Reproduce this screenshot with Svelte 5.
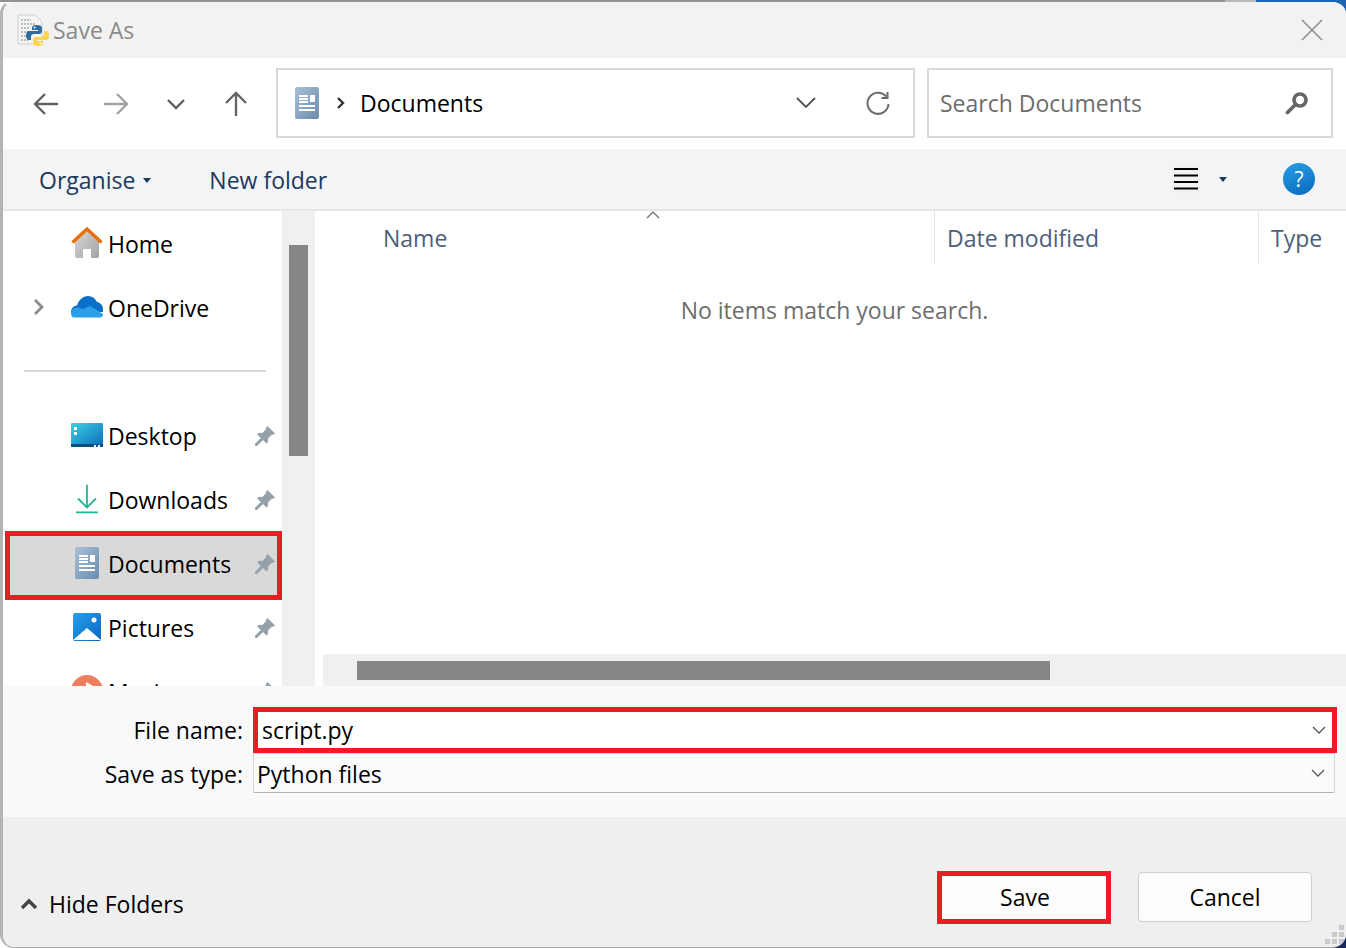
<script lang="ts">
  const places = [
    { label: 'Desktop', icon: 'desktop' },
    { label: 'Downloads', icon: 'downloads' },
    { label: 'Documents', icon: 'documents', selected: true },
    { label: 'Pictures', icon: 'pictures' },
    { label: 'Music', icon: 'music' }
  ];
</script>

{#snippet docIcon(size)}
  <svg class="doc" width={size} height={size * 1.33} viewBox="0 0 24 32">
    <defs>
      <linearGradient id="docfill" x1="0" y1="0" x2="1" y2="1">
        <stop offset="0" stop-color="#a9c0d8" />
        <stop offset="1" stop-color="#6a8bad" />
      </linearGradient>
    </defs>
    <rect width="24" height="32" rx="2" fill="url(#docfill)" />
    <path d="M4 9h9M4 12h9M4 15h9M4 19h16M4 23h16" stroke="#fff" stroke-width="2" fill="none" />
    <rect x="15" y="8" width="5" height="7" fill="#fff" />
  </svg>
{/snippet}

{#snippet pin()}
  <svg class="pin" width="22" height="22" viewBox="0 0 22 22">
    <path d="M13.500 1 21 8.500l-2 1.500-1-.5-4 4 .2 3.300-1.700 1.700L9 15l-6 6-2-.3-.2-1.700 6-6L3.200 9.500 5 7.800l3.300.2 4-4-.5-1z" fill="#97a1a9" />
  </svg>
{/snippet}

<div class="window">
  <header class="titlebar">
    <svg width="32" height="32" viewBox="0 0 32 32">
      <path d="M1 1h17l7 7v22H1z" fill="#f4f4f4" stroke="#cfcfcf" />
      <path d="M4 6h10M4 10h14M4 14h8M4 18h8M4 22h8M4 26h8" stroke="#a9a9a9" stroke-width="1.500" stroke-dasharray="2 1" />
      <path d="M20 11c-4 0-5 1-5 3v2h6v1h-9c-2 0-3 2-3 4.500s1 4.500 3 4.500h2v-3c0-2 1-3 3-3h5c2 0 3-1 3-3v-3c0-2-2-3-5-3z" fill="#2f6d9f" />
      <path d="M21 32c4 0 5-1 5-3v-2h-6v-1h9c2 0 3-2 3-4.500S31 17 29 17h-2v3c0 2-1 3-3 3h-5c-2 0-3 1-3 3v3c0 2 2 3 5 3z" fill="#fbd44c" />
      <circle cx="17.500" cy="13.500" r="1" fill="#fff" />
      <circle cx="23.500" cy="29.500" r="1" fill="#fff" />
    </svg>
    <span class="title">Save As</span>
    <svg class="close" width="22" height="22" viewBox="0 0 22 22">
      <path d="M1 1l20 20M21 1 1 21" stroke="#8a8a8a" stroke-width="1.500" fill="none" />
    </svg>
  </header>

  <div class="navbar">
    <div class="navbtns">
      <svg width="26" height="24" viewBox="0 0 26 24"><path d="M25 12H2M12 2 2 12l10 10" stroke="#636363" stroke-width="2.400" fill="none" /></svg>
      <svg width="26" height="24" viewBox="0 0 26 24"><path d="M1 12h23M14 2l10 10-10 10" stroke="#a2a2a2" stroke-width="2.400" fill="none" /></svg>
      <svg width="18" height="12" viewBox="0 0 18 12"><path d="M1 2l8 8 8-8" stroke="#5f5f5f" stroke-width="2.400" fill="none" /></svg>
      <svg width="24" height="26" viewBox="0 0 24 26"><path d="M12 25V2M2 12 12 2l10 10" stroke="#666" stroke-width="2.400" fill="none" /></svg>
    </div>
    <div class="crumbs">
      {@render docIcon(24)}
      <svg class="sep" width="8" height="12" viewBox="0 0 8 12"><path d="M1 1l5 5-5 5" stroke="#333" stroke-width="2.400" fill="none" /></svg>
      <span>Documents</span>
      <svg class="drop" width="20" height="12" viewBox="0 0 20 12"><path d="M1 1l9 9 9-9" stroke="#555" stroke-width="1.800" fill="none" /></svg>
      <svg class="refresh" width="24" height="24" viewBox="0 0 24 24"><path d="M20 5.500A10.500 10.500 0 1 0 22.500 13M21.500 1v6h-6" stroke="#6b6b6b" stroke-width="2" fill="none" /></svg>
    </div>
    <div class="search">
      <span>Search Documents</span>
      <svg width="24" height="24" viewBox="0 0 24 24"><circle cx="15" cy="9" r="6" stroke="#666" stroke-width="3.600" fill="none" /><path d="M10.500 13.500 2.500 21.500" stroke="#666" stroke-width="3.800" stroke-linecap="round" /></svg>
    </div>
  </div>

  <div class="commands">
    <span class="cmd">Organise <i class="caret"></i></span>
    <span class="cmd newfolder">New folder</span>
    <div class="viewbtn">
      <svg width="28" height="28" viewBox="0 0 28 28"><path d="M2 4h24M2 10.500h24M2 17h24M2 23.500h24" stroke="#000" stroke-width="2" /></svg>
    </div>
    <i class="caret view"></i>
    <span class="help">?</span>
  </div>

  <div class="main">
    <nav class="sidebar">
      <div class="row">
        <svg class="icon" width="32" height="32" viewBox="0 0 32 32">
          <defs>
            <linearGradient id="wall" x1="0" y1="0" x2="1" y2="1"><stop offset="0" stop-color="#d8d8d8" /><stop offset="1" stop-color="#a3a3a3" /></linearGradient>
          </defs>
          <path d="M4 13 16 3l12 10v16a2 2 0 0 1-2 2h-6v-9h-8v9H6a2 2 0 0 1-2-2z" fill="url(#wall)" />
          <path d="M1.500 15.500 16 2l14.500 13.500" stroke="#e8710a" stroke-width="3.400" fill="none" />
        </svg>
        <span>Home</span>
      </div>
      <div class="row">
        <svg class="chev" width="12" height="18" viewBox="0 0 12 18"><path d="M2 2l7 7-7 7" stroke="#8c8c8c" stroke-width="2.800" fill="none" /></svg>
        <svg class="icon" width="32" height="22" viewBox="0 0 32 22">
          <path d="M0 16c0-3 2-6 6-6.500C8 3 13 0 17 0c4 0 7 2 9 6 3 .5 6 3 6 7v3H0z" fill="#0a6fc9" />
          <path d="M3 21.500c-2 0-3-2-3-5 0-2 1-3 3-4 3-2 6-1 9 .5l7-3 13 8c0 2-1 3.500-3 3.500z" fill="#2aa0ea" />
        </svg>
        <span>OneDrive</span>
      </div>
      <div class="divider"><hr /></div>
      {#each places as place}
        <div class="row" class:selected={place.selected}>
          {#if place.icon === 'desktop'}
            <svg class="icon" width="32" height="24" viewBox="0 0 32 24">
              <defs>
                <linearGradient id="screen" x1="0" y1="0" x2="1" y2="1"><stop offset="0" stop-color="#3bd3e2" /><stop offset="1" stop-color="#0b6cbf" /></linearGradient>
              </defs>
              <rect width="32" height="23" rx="1" fill="url(#screen)" />
              <rect y="21" width="32" height="3" fill="#0d4f7d" />
              <path d="M3 4h3v3H3zM3 9h3v3H3zM23 22h2v2h-2zM27 22h2v2h-2z" fill="#fff" />
            </svg>
          {:else if place.icon === 'downloads'}
            <svg class="icon" width="24" height="29" viewBox="0 0 24 29">
              <path d="M12 0v23M3 14l9 9 9-9M1 28h22" stroke="#23b596" stroke-width="1.800" fill="none" />
            </svg>
          {:else if place.icon === 'documents'}
            {@render docIcon(24)}
          {:else if place.icon === 'pictures'}
            <svg class="icon" width="28" height="28" viewBox="0 0 28 28">
              <defs>
                <linearGradient id="sky" x1="0" y1="0" x2="1" y2="1"><stop offset="0" stop-color="#25a1e8" /><stop offset="1" stop-color="#0b67c4" /></linearGradient>
              </defs>
              <rect width="28" height="28" rx="2" fill="url(#sky)" />
              <path d="M0 27 14 15l14 12z" fill="#fff" />
              <circle cx="21" cy="7" r="2.500" fill="#fff" />
            </svg>
          {:else}
            <svg class="icon" width="32" height="32" viewBox="0 0 32 32">
              <circle cx="16" cy="16" r="16" fill="#ec7f60" />
              <path d="M15 7l7 4-5 1v9h-2z" fill="#fff" />
            </svg>
          {/if}
          <span>{place.label}</span>
          {@render pin()}
        </div>
      {/each}
    </nav>
    <div class="vscroll"><div class="vthumb"></div></div>
    <section class="files">
      <div class="columns">
        <svg class="sortmark" width="14" height="8" viewBox="0 0 14 8"><path d="M1 7l6-6 6 6" stroke="#6a6a6a" stroke-width="1.200" fill="none" /></svg>
        <div class="col name">Name</div>
        <div class="col date">Date modified</div>
        <div class="col type">Type</div>
      </div>
      <p class="empty">No items match your search.</p>
      <div class="hscroll"><div class="hthumb"></div></div>
    </section>
  </div>

  <div class="form">
    <label for="fname">File name:</label>
    <div class="field active">
      <input id="fname" value="script.py" />
      <svg width="14" height="8" viewBox="0 0 14 8"><path d="M1 1l6 6 6-6" stroke="#555" stroke-width="1.300" fill="none" /></svg>
    </div>
    <label for="ftype" class="lower">Save as type:</label>
    <div class="field" id="ftype">
      <span class="lower">Python files</span>
      <svg width="14" height="8" viewBox="0 0 14 8"><path d="M1 1l6 6 6-6" stroke="#555" stroke-width="1.300" fill="none" /></svg>
    </div>
  </div>

  <footer class="footer">
    <div class="hide">
      <svg width="18" height="12" viewBox="0 0 18 12"><path d="M2 10l7-7 7 7" stroke="#444" stroke-width="3.400" fill="none" /></svg>
      <span>Hide Folders</span>
    </div>
    <button class="save">Save</button>
    <button class="cancel">Cancel</button>
    <svg class="grip" width="22" height="22" viewBox="0 0 22 22">
      <path d="M15 0h5v5h-5zM8 7h5v5H8zM15 7h5v5h-5zM1 14h5v5H1zM8 14h5v5H8zM15 14h5v5h-5z" fill="#c9c9c9" />
    </svg>
  </footer>
</div>

<style>
  :global(body) {
    margin: 0;
    background: #fff;
    overflow: hidden;
  }
  /* what shows behind the rounded window: top edge strip and the desktop in two corners */
  :global(#app) {
    background:
      linear-gradient(90deg, #929292 0 1225px, #b9b9b9 1225px 1256px, #1e63b4 1256px) top / 100% 2px no-repeat,
      linear-gradient(#1e63b4, #1e63b4) top right / 40px 30px no-repeat,
      linear-gradient(#1a2a5c, #1a2a5c) bottom right / 40px 30px no-repeat;
  }
  .window {
    box-sizing: border-box;
    width: 1346px;
    height: 948px;
    display: flex;
    flex-direction: column;
    background: #fff;
    background-clip: padding-box;
    border-top: 2px solid transparent;
    border-left: 3px solid #b4b4b4;
    border-bottom: 1px solid #a8a8a8;
    border-radius: 14px;
    overflow: hidden;
    font-family: "Open Sans", "Liberation Sans", sans-serif;
    font-size: 23px;
    color: #000;
  }
  .titlebar {
    height: 56px;
    flex: none;
    display: flex;
    align-items: center;
    padding: 0 23px 0 14px;
    background: #f2f2f2;
  }
  .title {
    margin-left: 4px;
    color: #8a8a8a;
  }
  .close {
    margin-left: auto;
  }
  .navbar {
    height: 91px;
    flex: none;
    display: flex;
    align-items: center;
    gap: 12px;
    padding-right: 13px;
    padding-bottom: 1px;
    box-sizing: border-box;
    background: #fff;
  }
  .navbtns {
    width: 261px;
    box-sizing: border-box;
    padding-left: 30px;
    margin-top: 1px;
    display: flex;
    align-items: center;
  }
  .navbtns svg:nth-child(2) {
    margin-left: 44px;
  }
  .navbtns svg:nth-child(3) {
    margin-left: 38px;
  }
  .navbtns svg:nth-child(4) {
    margin-left: 39px;
  }
  .crumbs,
  .search {
    height: 70px;
    box-sizing: border-box;
    border: 2px solid #d9d9d9;
    display: flex;
    align-items: center;
  }
  .crumbs {
    width: 639px;
    padding: 0 23px 0 17px;
  }
  .sep {
    margin: 0 15px 0 18px;
  }
  .drop {
    margin-left: auto;
    margin-right: 1px;
  }
  .refresh {
    margin-left: 49px;
  }
  .search {
    flex: 1;
    padding: 0 22px 0 11px;
    justify-content: space-between;
    color: #6d6d6d;
  }
  .commands {
    height: 62px;
    flex: none;
    box-sizing: border-box;
    display: flex;
    align-items: center;
    padding: 0 31px 0 36px;
    background: #f3f4f6;
    border-bottom: 2px solid #e6e7e9;
    color: #1c3a5e;
  }
  .cmd {
    display: flex;
    align-items: center;
    gap: 8px;
    margin-top: 2px;
  }
  .newfolder {
    margin-left: 58px;
  }
  .caret {
    width: 0;
    height: 0;
    border: 4px solid transparent;
    border-top: 5px solid #1c3a5e;
    border-bottom: 0;
  }
  .viewbtn {
    margin-left: auto;
    display: flex;
    background: #f0f1f3;
  }
  .caret.view {
    margin: 0 56px 0 19px;
  }
  .help {
    width: 32px;
    height: 32px;
    border-radius: 50%;
    background: linear-gradient(160deg, #2a9fe6, #0768bd);
    color: #fff;
    text-align: center;
    line-height: 32px;
    font-size: 21px;
  }
  .main {
    height: 475px;
    flex: none;
    display: flex;
    background: #fff;
  }
  .sidebar {
    width: 279px;
    flex: none;
    padding-top: 2px;
    overflow: hidden;
  }
  .row {
    position: relative;
    height: 64px;
    display: flex;
    align-items: center;
  }
  .row > * {
    position: relative;
    z-index: 1;
  }
  .row span {
    position: absolute;
    left: 105px;
    margin-top: -2px;
    white-space: nowrap;
  }
  .icon {
    position: absolute;
    left: 84px;
    top: calc(50% - 2px);
    transform: translate(-50%, -50%);
  }
  .row > :global(.doc) {
    position: absolute;
    left: 72px;
    margin-top: -4px;
  }
  .chev {
    position: absolute;
    left: 30px;
    margin-top: -4px;
  }
  .pin {
    position: absolute;
    right: 6px;
    margin-top: -3px;
  }
  .selected::before {
    content: "";
    position: absolute;
    z-index: 0;
    top: -2px;
    bottom: -3px;
    left: 2px;
    right: 0;
    box-sizing: border-box;
    background: #d9d9d9;
    border: 5px solid #ed1c24;
  }
  .divider {
    height: 64px;
    box-sizing: border-box;
    padding: 29px 16px 0 21px;
  }
  .divider hr {
    margin: 0;
    border: 0;
    height: 2px;
    background: #d8d8d8;
  }
  .vscroll {
    width: 33px;
    flex: none;
    box-sizing: border-box;
    padding: 34px 7px 0;
    background: #f0f0f0;
    margin-right: 8px;
  }
  .vthumb {
    height: 211px;
    background: #868686;
  }
  .files {
    position: relative;
    flex: 1;
    min-width: 0;
    display: flex;
    flex-direction: column;
  }
  .columns {
    height: 53px;
    flex: none;
    display: grid;
    grid-template-columns: 612px 324px 1fr;
    color: #4c607a;
  }
  .sortmark {
    position: absolute;
    top: 0;
    left: 323px;
  }
  .col {
    display: flex;
    align-items: center;
    padding-left: 12px;
    border-right: 1px solid #e5e5e5;
  }
  .col.name {
    padding-left: 60px;
  }
  .col.type {
    border-right: 0;
  }
  .empty {
    margin: 0;
    padding-top: 30px;
    flex: 1;
    text-align: center;
    color: #6d6d6d;
  }
  .hscroll {
    height: 32px;
    flex: none;
    box-sizing: border-box;
    padding: 7px 296px 6px 34px;
    background: #f0f0f0;
  }
  .hthumb {
    height: 100%;
    background: #868686;
  }
  .form {
    height: 131px;
    flex: none;
    box-sizing: border-box;
    padding: 21px 9px 0 0;
    display: grid;
    grid-template-columns: 240px 1fr;
    grid-template-rows: 46px 40px;
    column-gap: 10px;
    align-content: start;
    align-items: center;
    background: #f9f9f9;
  }
  .form label {
    text-align: right;
  }
  .lower {
    margin-top: 2px;
  }
  .field {
    height: 40px;
    box-sizing: border-box;
    display: flex;
    align-items: center;
    justify-content: space-between;
    padding: 0 9px 0 3px;
    background: #fbfbfb;
    border: 1px solid #d4d4d4;
    border-bottom-color: #b0b0b0;
    border-radius: 2px;
    margin-right: 2px;
  }
  .field.active {
    height: 46px;
    background: #fff;
    border: 5px solid #ed1c24;
    border-radius: 0;
    margin-right: 0;
    padding: 0 6px 0 4px;
  }
  .field input {
    flex: 1;
    min-width: 0;
    border: 0;
    padding: 0;
    outline: 0;
    background: none;
    font: inherit;
    color: #000;
  }
  .footer {
    position: relative;
    flex: 1;
    display: flex;
    align-items: center;
    background: #efefef;
    padding: 44px 34px 0 17px;
  }
  .hide {
    display: flex;
    align-items: center;
    gap: 11px;
    margin-right: auto;
  }
  button {
    font: inherit;
    color: #000;
    width: 174px;
    box-sizing: border-box;
    background: #fdfdfd;
    margin-bottom: 14px;
  }
  .save {
    height: 53px;
    border: 5px solid #ed1c24;
    margin-right: 27px;
    padding-left: 8px;
  }
  .cancel {
    height: 50px;
    border: 1px solid #cfcfcf;
    border-radius: 4px;
  }
  .grip {
    position: absolute;
    right: 0;
    bottom: 0;
  }
</style>
